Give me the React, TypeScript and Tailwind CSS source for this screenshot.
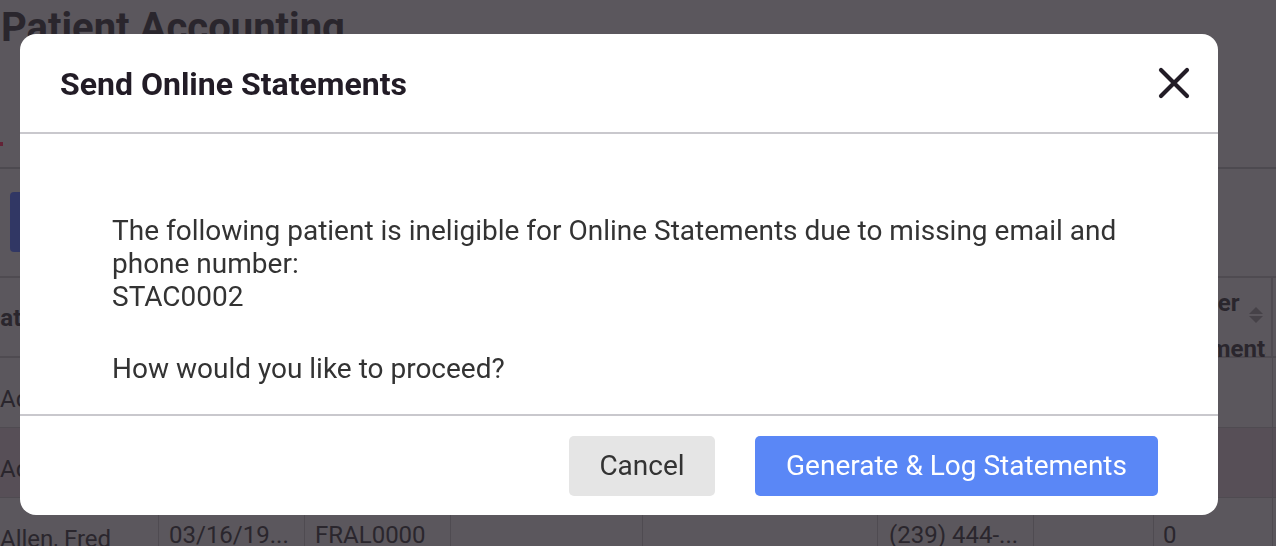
const font = { fontFamily: "Roboto, 'Liberation Sans', sans-serif" };

function SortIcon() {
  return (
    <svg width="16" height="18" viewBox="0 0 16 18" className="text-[#a2a2a2]">
      <path d="M8 1 L15 8 H1 Z" fill="currentColor" />
      <path d="M8 17 L15 10 H1 Z" fill="currentColor" />
    </svg>
  );
}

function CloseIcon() {
  return (
    <svg width="34" height="34" viewBox="0 0 34 34" fill="none">
      <path
        d="M4 4 L30 30 M30 4 L4 30"
        stroke="currentColor"
        strokeWidth="4.2"
        strokeLinecap="round"
      />
    </svg>
  );
}

function BackgroundPage() {
  return (
    <div className="min-h-[546px] bg-[#d6d6d6] overflow-hidden text-[#5e5e60]" style={font}>
      {/* Page title */}
      <h1 className="pt-[4px] pl-[1px] text-[40px] font-bold leading-[48px]">Patient Accounting</h1>

      <div className="mt-[90px] h-[4px] w-[3px] bg-[#ec5677]" />
      <div className="mt-[21px] h-[2px] bg-[#b5b6b6]" />

      {/* Toolbar */}
      <div className="pt-[23px] pb-[24px] pl-[10px]">
        <button className="h-[60px] w-[220px] rounded-[4px] bg-[#6f88e8] text-[24px] text-white">
          Send Statements
        </button>
      </div>

      {/* Table */}
      <div className="border-t-2 border-[#b8b8b8]">
        <div className="flex h-[80px] border-b-2 border-[#b8b8b8] text-[24px] font-bold">
          <div className="w-[158px] overflow-hidden pt-[22px]">
            <span className="-ml-[15px] block">Patient</span>
          </div>
          <div className="w-[146px]" />
          <div className="w-[146px]" />
          <div className="w-[192px]" />
          <div className="w-[235px]" />
          <div className="w-[156px]" />
          <div className="w-[120px]" />
          <div className="relative w-[120px] border-r-2 border-[#b8b8b8]">
            <div className="w-[113px] overflow-hidden whitespace-nowrap pt-[4px] leading-[50px]">
              <div className="-mt-[4px]">Number</div>
              <div className="-mt-[4px]">Statements</div>
            </div>
            <div className="absolute right-[7px] top-[28px]">
              <SortIcon />
            </div>
          </div>
        </div>
        {[
          ["Adams, Kim", "02/11/19...", "KIAD0001", "", "", "(239) 555-...", "", "1"],
          ["Adler, Sam", "07/23/19...", "STAC0002", "", "", "", "", "0"],
          ["Allen, Fred", "03/16/19...", "FRAL0000", "", "", "(239) 444-...", "", "0"],
        ].map((row, i) => (
          <div
            key={i}
            className={
              i === 1
                ? "flex h-[70px] border-b border-[#b8b8b8] bg-[#ccc4c7] text-[24px]"
                : "flex h-[70px] border-b border-[#b8b8b8] text-[24px]"
            }
          >
            <div className="w-[158px] pt-[23px] whitespace-nowrap">{row[0]}</div>
            <div className="w-[146px] border-l border-[#b8b8b8] pl-[10px] pt-[19px]">{row[1]}</div>
            <div className="w-[146px] border-l border-[#b8b8b8] pl-[10px] pt-[19px]">{row[2]}</div>
            <div className="w-[192px] border-l border-[#b8b8b8]">{row[3]}</div>
            <div className="w-[235px] border-l border-[#b8b8b8]">{row[4]}</div>
            <div className="w-[156px] border-l border-[#b8b8b8] pl-[11px] pt-[19px]">{row[5]}</div>
            <div className="w-[120px] border-l border-[#b8b8b8]">{row[6]}</div>
            <div className="w-[120px] border-x border-[#b8b8b8] pl-[9px] pt-[19px]">{row[7]}</div>
          </div>
        ))}
      </div>
    </div>
  );
}

function StatementsDialog() {
  return (
    <div className="w-[1198px] overflow-hidden rounded-[16px] bg-white" style={font}>
      <div className="flex h-[100px] items-center justify-between border-b-2 border-[#c9c8cd] pl-[40px] pr-[27px]">
        <h2 className="pt-[2px] text-[32px] font-bold leading-[40px] text-[#221c26]">Send Online Statements</h2>
        <button className="flex h-[34px] w-[34px] items-center justify-center text-[#221c26]">
          <CloseIcon />
        </button>
      </div>

      <div className="h-[280px] pl-[92px] pr-[92px] pt-[80px] text-[28px] leading-[33px] text-[#333333]">
        <p>
          The following patient is ineligible for Online Statements due to missing email and phone number:
          <br />
          STAC0002
        </p>
        <p className="mt-[39px]">How would you like to proceed?</p>
      </div>

      <div className="flex h-[101px] items-center justify-end gap-[40px] border-t-2 border-[#c9c8cd] pr-[60px]">
        <button className="h-[60px] w-[146px] rounded-[5px] bg-[#e5e5e5] text-[28px] text-[#333333]">
          Cancel
        </button>
        <button className="h-[60px] w-[403px] rounded-[5px] bg-[#5a87f6] text-[28px] text-white">
          Generate &amp; Log Statements
        </button>
      </div>
    </div>
  );
}

export default function App() {
  return (
    <div className="relative h-[546px] w-[1276px] overflow-hidden">
      <BackgroundPage />
      <div className="fixed inset-0 bg-[rgba(9,1,12,0.6)] pl-[20px] pt-[34px]">
        <StatementsDialog />
      </div>
    </div>
  );
}
